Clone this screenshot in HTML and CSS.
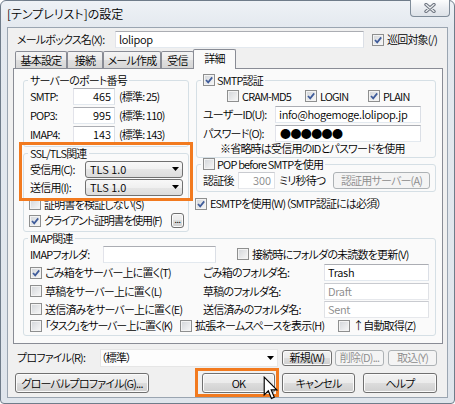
FILE: index.html
```html
<!DOCTYPE html>
<html lang="ja">
<head>
<meta charset="utf-8">
<title>[テンプレリスト]の設定</title>
<link rel="stylesheet" href="styles.css">
</head>
<body>
<div class="window">
  <div class="titlebar">
    <span class="title">[テンプレリスト]の設定</span>
    <div class="close">
      <svg class="xicon" viewBox="0 0 12 10"><path class="xo" d="M2 1.5 L10 8.5 M10 1.5 L2 8.5"/><path class="xi" d="M2 1.5 L10 8.5 M10 1.5 L2 8.5"/></svg>
    </div>
  </div>

  <div class="client">
    <div class="row mbrow">
      <span class="w-mb">メールボックス名(X):</span>
      <span class="tb w-mbin">lolipop</span>
      <span class="cb on ml8"><svg viewBox="0 0 10 10"><path d="M2 5 L4.2 7.4 L8.2 2.4"/></svg></span><span class="ct">巡回対象(/)</span>
    </div>

    <div class="tabs">
      <div class="tab t1">基本設定</div>
      <div class="tab t2">接続</div>
      <div class="tab t3">メール作成</div>
      <div class="tab t4">受信</div>
      <div class="tab sel">詳細</div>
    </div>

    <div class="panel">
      <div class="cols">
        <div class="lcol">
          <fieldset class="grp port">
            <legend>サーバーのポート番号</legend>
            <div class="row r19"><span class="w-port">SMTP:</span><span class="tb num w-portin">465</span><span class="note">(標準: 25)</span></div>
            <div class="row r19"><span class="w-port">POP3:</span><span class="tb num w-portin">995</span><span class="note">(標準: 110)</span></div>
            <div class="row r19"><span class="w-port">IMAP4:</span><span class="tb num w-portin">143</span><span class="note">(標準: 143)</span></div>
          </fieldset>
          <fieldset class="grp ssl">
            <legend>SSL/TLS関連</legend>
            <div class="row r18"><span class="w-ssl">受信用(C):</span><span class="combo w-combo">TLS 1.0<svg class="arr" viewBox="0 0 7 4"><path d="M0 0H7L3.5 4Z"/></svg></span></div>
            <div class="row r18"><span class="w-ssl">送信用(I):</span><span class="combo w-combo">TLS 1.0<svg class="arr" viewBox="0 0 7 4"><path d="M0 0H7L3.5 4Z"/></svg></span></div>
            <div class="row r16"><span class="cb cbl"></span><span class="ct">証明書を検証しない(S)</span></div>
            <div class="row r17"><span class="cb cbl on"><svg viewBox="0 0 10 10"><path d="M2 5 L4.2 7.4 L8.2 2.4"/></svg></span><span class="ct tight">クライアント証明書を使用(F)</span><span class="btn dots">...</span></div>
          </fieldset>
        </div>

        <div class="rcol">
          <fieldset class="grp smtp">
            <legend><span class="lg"><span class="cb on"><svg viewBox="0 0 10 10"><path d="M2 5 L4.2 7.4 L8.2 2.4"/></svg></span>SMTP認証</span></legend>
            <div class="row r18 auth">
              <span class="opt w-cram"><span class="cb"></span><span class="ct">CRAM-MD5</span></span>
              <span class="opt w-login"><span class="cb on"><svg viewBox="0 0 10 10"><path d="M2 5 L4.2 7.4 L8.2 2.4"/></svg></span><span class="ct">LOGIN</span></span>
              <span class="opt"><span class="cb on"><svg viewBox="0 0 10 10"><path d="M2 5 L4.2 7.4 L8.2 2.4"/></svg></span><span class="ct">PLAIN</span></span>
            </div>
            <div class="row r19"><span class="w-uid">ユーザーID(U):</span><span class="tb w-uidin">info@hogemoge.lolipop.jp</span></div>
            <div class="row r18"><span class="w-uid">パスワード(O):</span><span class="tb w-uidin pw">●●●●●●</span></div>
            <div class="row r13 hint">※省略時は受信用のIDとパスワードを使用</div>
          </fieldset>
          <fieldset class="grp pop">
            <legend><span class="lg"><span class="cb"></span>POP before SMTPを使用</span></legend>
            <div class="row r18">
              <span class="w-auth">認証後</span>
              <span class="tb num dis w-wait">300</span>
              <span class="note">ミリ秒待つ</span>
              <span class="btn dis w-srv">認証用サーバー(A)</span>
            </div>
          </fieldset>
          <div class="row esmtp"><span class="cb cbl on"><svg viewBox="0 0 10 10"><path d="M2 5 L4.2 7.4 L8.2 2.4"/></svg></span><span class="ct">ESMTPを使用(W)（SMTP認証には必須）</span></div>
        </div>
      </div>

      <fieldset class="grp imap">
        <legend>IMAP関連</legend>
        <div class="row r18">
          <span class="w-imapl">IMAPフォルダ:</span>
          <span class="tb w-imapin"></span>
          <span class="cb ml21"></span><span class="ct">接続時にフォルダの未読数を更新(V)</span>
        </div>
        <div class="row r19">
          <span class="cell w-c1"><span class="cb on"><svg viewBox="0 0 10 10"><path d="M2 5 L4.2 7.4 L8.2 2.4"/></svg></span><span class="ct">ごみ箱をサーバー上に置く(T)</span></span>
          <span class="w-c2">ごみ箱のフォルダ名:</span>
          <span class="tb w-fin">Trash</span>
        </div>
        <div class="row r18">
          <span class="cell w-c1"><span class="cb"></span><span class="ct">草稿をサーバー上に置く(L)</span></span>
          <span class="w-c2">草稿のフォルダ名:</span>
          <span class="tb dis w-fin">Draft</span>
        </div>
        <div class="row r18">
          <span class="cell w-c1"><span class="cb"></span><span class="ct">送信済みをサーバー上に置く(E)</span></span>
          <span class="w-c2">送信済みのフォルダ名:</span>
          <span class="tb dis w-fin">Sent</span>
        </div>
        <div class="row r15">
          <span class="cell w-d1"><span class="cb"></span><span class="ct tight">「タスク」をサーバー上に置く(K)</span></span>
          <span class="cell w-d2"><span class="cb"></span><span class="ct">拡張ネームスペースを表示(H)</span></span>
          <span class="cell"><span class="cb"></span><span class="ct">↑自動取得(Z)</span></span>
        </div>
      </fieldset>
    </div>

    <div class="row profrow">
      <span class="w-prof">プロファイル(R):</span>
      <span class="pcombo">（標準）<svg class="arr" viewBox="0 0 7 4"><path d="M0 0H7L3.5 4Z"/></svg></span>
      <span class="btn sm b-new">新規(W)</span>
      <span class="btn sm dis b-del">削除(D)...</span>
      <span class="btn sm dis b-imp">取込(Y)</span>
    </div>

    <div class="row btnrow">
      <span class="btn b-glob">グローバルプロファイル(G)...</span>
      <span class="btn b-ok">OK</span>
      <span class="btn b-cancel">キャンセル</span>
      <span class="btn b-help">ヘルプ</span>
    </div>
  </div>

  <div class="hl hl-ssl"></div>
  <div class="hl hl-ok"></div>
  <svg class="cursor" viewBox="0 0 13 21"><path d="M1 1 V16.5 L4.6 13 L7.3 19.6 L9.8 18.6 L7.1 12.1 H12 Z"/></svg>
</div>
</body>
</html>
```

FILE: styles.css
```css
* { box-sizing: border-box; }
html, body { margin: 0; padding: 0; }
body {
  width: 455px;
  height: 404px;
  overflow: hidden;
  background: #ffffff;
  font-family: "Noto Sans CJK JP", "Noto Sans", sans-serif;
  font-size: 11px;
  font-weight: 350;
  line-height: 13px;
  letter-spacing: -0.8px;
  color: #000;
  font-feature-settings: "palt" 1;
}

.window {
  position: relative;
  width: 455px;
  height: 404px;
  border: 1px solid #6f7c8a;
  border-radius: 6px 6px 4px 4px;
  background: linear-gradient(#eef2f6, #e4e9ef 26px, #dfe5ec);
  display: flex;
  flex-direction: column;
}

.titlebar { height: 26px; display: flex; align-items: flex-start; }
.title { margin: 6px 0 0 6px; font-size: 12px; line-height: 14px; letter-spacing: 0; }
.close {
  margin-left: auto;
  margin-right: 4px;
  margin-top: -1px;
  width: 40px;
  height: 17px;
  border: 1px solid #7f8c99;
  border-top: none;
  border-radius: 0 0 4px 4px;
  background: linear-gradient(#fcfdfd, #eaedf1 50%, #dde2e8);
  display: flex;
  align-items: center;
  justify-content: center;
}
.xicon { width: 12px; height: 10px; }
.xo { fill: none; stroke: #6e7580; stroke-width: 3.4; stroke-linecap: round; }
.xi { fill: none; stroke: #eef0f2; stroke-width: 1.2; stroke-linecap: round; }

.client {
  margin-left: 6px;
  width: 441px;
  height: 371px;
  border: 1px solid #9aa5b1;
  background: #f0f0f0;
}

.row { display: flex; align-items: center; white-space: nowrap; }
.r13 { height: 13px; }
.r15 { height: 15px; }
.r16 { height: 16px; }
.r17 { height: 17px; }
.r18 { height: 18px; }
.r19 { height: 19px; }

/* text boxes */
.tb {
  display: flex;
  align-items: center;
  height: 17px;
  background: #fff;
  border: 1px solid;
  border-color: #abadb3 #dbdfe6 #e3e9ef #e2e3ea;
  padding: 0 3px;
  overflow: hidden;
  letter-spacing: -0.3px;
}
.tb.num { justify-content: flex-end; letter-spacing: 0; }
.tb.dis { color: #8a8a8a; border-color: #c9cbd0 #e0e2e6 #e6e8ec #e0e2e6; }
.pw { font-size: 11px; font-weight: 400; letter-spacing: -0.6px; padding-left: 4px; }

/* checkboxes */
.cb {
  flex: none;
  width: 12px;
  height: 12px;
  border: 1px solid #8e8f8f;
  background: linear-gradient(135deg, #d2d5d9, #f8f8f8);
  box-shadow: inset 0 0 0 1px #f3f3f3;
  display: flex;
  align-items: center;
  justify-content: center;
}
.cb svg { width: 10px; height: 10px; }
.cb path { fill: none; stroke: #3e5b9a; stroke-width: 1.7; }
.ct { margin-left: 3px; }
.tight { letter-spacing: -1.2px; }
.cbl { margin-left: -1px; }
.ml8 { margin-left: 8px; }
.ml21 { margin-left: 21px; }

/* mailbox row */
.mbrow { height: 17px; margin-top: 3px; padding-left: 9px; }
.w-mb { width: 98px; }
.w-mbin { width: 249px; }

/* tabs */
.tabs {
  display: flex;
  align-items: flex-end;
  height: 19px;
  margin-top: 1px;
  padding-left: 7px;
}
.tab {
  height: 17px;
  border: 1px solid #898c95;
  border-bottom: none;
  border-radius: 2px 2px 0 0;
  background: linear-gradient(#f4f4f4, #ebebeb 50%, #dfdfdf 50%, #d6d6d6);
  display: flex;
  align-items: center;
  justify-content: center;
  white-space: nowrap;
}
.t1 { width: 52px; }
.t2 { width: 36px; }
.t3 { width: 58px; }
.t4 { width: 33px; }
.tab.sel {
  position: relative;
  z-index: 1;
  width: 43px;
  height: 20px;
  margin-left: -1px;
  margin-bottom: -1px;
  background: #fafafa;
  padding-bottom: 2px;
}

/* panel */
.panel {
  margin-left: 5px;
  width: 430px;
  height: 276px;
  border: 1px solid #898c95;
  background: #fafafa;
  padding: 5px 5px 0 9px;
}
.cols { display: flex; gap: 7px; }
.lcol { width: 166px; }
.rcol { width: 240px; display: flex; flex-direction: column; }

fieldset.grp {
  margin: 0;
  min-width: 0;
  padding: 1px 4px 2px 6px;
  border: 1px solid #d5dfe5;
  border-radius: 3px;
}
legend {
  padding: 0 2px;
  margin-left: -2px;
  line-height: 12px;
  height: 12px;
  white-space: nowrap;
}
.lg { display: flex; align-items: center; gap: 2px; }

.w-port { width: 43px; }
.w-portin { width: 42px; }
.note { margin-left: 4px; }

.ssl { margin-top: 2px; padding: 2px 4px 0 6px; }
.w-ssl { width: 55px; }
.combo {
  display: flex;
  align-items: center;
  height: 17px;
  border: 1px solid #707070;
  border-radius: 3px;
  background: linear-gradient(#f8f8f8, #f0f0f0 50%, #e6e6e6 50%, #dcdcdc);
  padding: 0 3px 0 4px;
  letter-spacing: 0;
}
.w-combo { width: 98px; }
.arr { width: 7px; height: 4px; margin-left: auto; flex: none; }
.arr path { fill: #000; }

/* buttons */
.btn {
  display: flex;
  align-items: center;
  justify-content: center;
  height: 20px;
  border: 1px solid #707070;
  border-radius: 3px;
  background: linear-gradient(#f2f2f2, #ebebeb 50%, #dddddd 50%, #cfcfcf);
  box-shadow: inset 0 0 0 1px #fbfbfb;
  white-space: nowrap;
}
.btn.dis {
  border-color: #adb2b5;
  background: #f4f4f4;
  box-shadow: none;
  color: #8b8b8b;
}
.dots {
  margin-left: auto;
  width: 13px;
  height: 15px;
  font-size: 9px;
  line-height: 9px;
  letter-spacing: -0.5px;
  padding-bottom: 3px;
}

/* right column */
.smtp { padding: 1px 4px 5px 8px; }
.auth { padding-left: 24px; }
.opt { display: flex; align-items: center; }
.w-cram { width: 78px; }
.w-login { width: 63px; }
.w-uid { width: 72px; }
.w-uidin { width: 146px; }
.hint { padding-left: 17px; }

.pop { margin-top: 6px; padding: 2px 4px 3px 8px; }
.w-auth { width: 35px; }
.w-wait { width: 37px; }
.w-srv { margin-left: auto; margin-right: 1px; width: 97px; height: 17px; }

.esmtp { margin-top: 4px; height: 15px; }

/* IMAP */
.imap { margin-top: 2px; width: 413px; padding: 0 4px 0 6px; }
.w-imapl { width: 73px; }
.w-imapin { width: 113px; }
.cell { display: flex; align-items: center; }
.w-c1 { width: 173px; }
.w-c2 { width: 121px; }
.w-fin { width: 105px; }
.w-d1 { width: 150px; }
.w-d2 { width: 158px; }

/* profile */
.profrow { margin-top: 4px; height: 19px; padding-left: 9px; }
.w-prof { width: 83px; }
.pcombo {
  display: flex;
  align-items: center;
  width: 178px;
  height: 18px;
  background: #fdfdfd;
  border: 1px solid #e6e6e6;
  padding: 0 3px 0 0;
}
.sm { height: 16px; }
.b-new { margin-left: 4px; width: 50px; }
.b-del { margin-left: 3px; width: 49px; }
.b-imp { margin-left: 4px; width: 49px; }

.btnrow { margin-top: 6px; height: 20px; padding-left: 7px; }
.b-glob { width: 134px; }
.b-ok { margin-left: 53px; width: 73px; }
.b-cancel { margin-left: 7px; width: 73px; }
.b-help { margin-left: 8px; width: 74px; }

/* overlays */
.hl {
  position: absolute;
  border: 3px solid #f27a1f;
  pointer-events: none;
}
.hl-ssl { left: 18px; top: 141px; width: 174px; height: 59px; }
.hl-ok { left: 194px; top: 367px; width: 84px; height: 29px; }
.cursor {
  position: absolute;
  left: 262px;
  top: 375px;
  width: 15px;
  height: 24px;
}
.cursor path { fill: #fff; stroke: #000; stroke-width: 1; stroke-linejoin: miter; }
```
